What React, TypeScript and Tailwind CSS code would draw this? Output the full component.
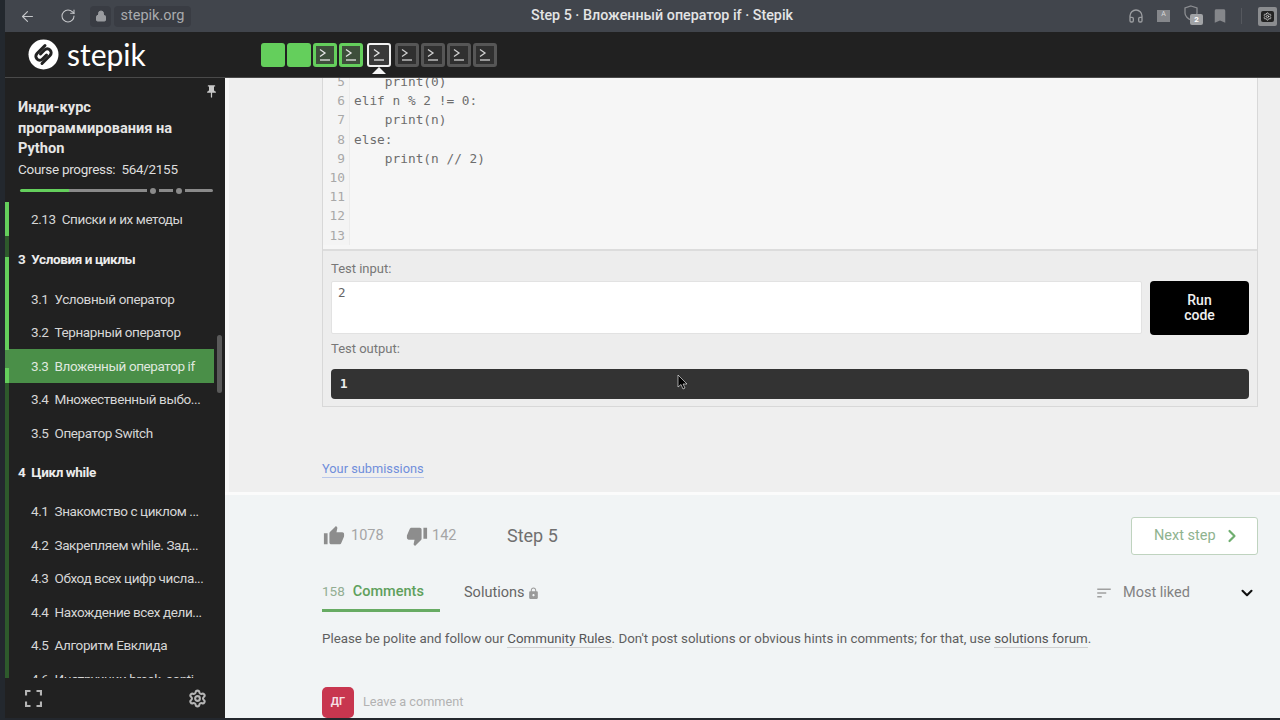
import React from "react";
import { ArrowLeft, RotateCw, Lock, Headphones, ChevronDown, ChevronRight, Settings } from "lucide-react";
import { MdThumbUp, MdThumbDown, MdLock, MdSort, MdBookmark, MdPushPin } from "react-icons/md";

const Term = ({ color = "#e5e5e5" }: { color?: string }) => (
  <svg width="14" height="14" viewBox="0 0 14 14" fill="none" stroke={color} strokeWidth="1.3">
    <path d="M2 1.5 L7 5 L2 8.5" />
    <path d="M2 12 H12" />
  </svg>
);

const Logo = () => (
  <svg width="31" height="31" viewBox="0 0 31 31">
    <circle cx="15.5" cy="15.5" r="15" fill="#fff" />
    <g fill="none" stroke="#212121" strokeWidth="3" strokeLinecap="round">
      <path d="M17 6.5 L9 14.5 A3.8 3.8 0 0 0 14.5 20 L18.5 16" />
      <path d="M14 24.5 L22 16.5 A3.8 3.8 0 0 0 16.5 11 L12.5 15" />
    </g>
  </svg>
);

const Step = ({ kind }: { kind: "solid" | "done" | "current" | "todo" }) => {
  if (kind === "solid") return <div className="w-6 h-6 rounded-[3px] bg-[#64cf5c]" />;
  if (kind === "done")
    return (
      <div className="w-6 h-6 rounded-[3px] bg-[#3e4f3b] border-[3px] border-[#64cf5c] flex items-center justify-center">
        <Term />
      </div>
    );
  if (kind === "current")
    return (
      <div className="relative w-6 h-6 rounded-[3px] bg-[#3a3a3a] border-2 border-[#f2f2f2] flex items-center justify-center">
        <Term />
        <div className="absolute left-[3px] top-[22px] w-0 h-0 border-x-[7px] border-x-transparent border-b-[7px] border-b-[#f5f5f5]" />
      </div>
    );
  return (
    <div className="w-6 h-6 rounded-[3px] bg-[#303030] border-[3px] border-[#565656] flex items-center justify-center">
      <Term color="#d0d0d0" />
    </div>
  );
};

const Row = ({ n, t, active }: { n: string; t: string; active?: boolean }) => (
  <div
    className={`h-[33.5px] w-[209px] shrink-0 flex items-center pl-[26px] text-[13.5px] tracking-[-0.4px] whitespace-nowrap ${
      active ? "bg-[#4a8f48] text-[#dfe8de]" : "text-[#d6d6d6]"
    }`}
  >
    <span className="mr-[6px]">{n}</span>
    <span>{t}</span>
  </div>
);

const Section = ({ n, t, h }: { n: string; t: string; h: string }) => (
  <div className={`${h} shrink-0 flex items-center pl-[13px] text-[13.5px] tracking-[-0.4px] font-bold text-[#ececec]`}>
    <span className="mr-[6px]">{n}</span>
    {t}
  </div>
);

const codeLines = [
  { n: 5, c: "    print(0)" },
  { n: 6, c: "elif n % 2 != 0:" },
  { n: 7, c: "    print(n)" },
  { n: 8, c: "else:" },
  { n: 9, c: "    print(n // 2)" },
  { n: 10, c: "" },
  { n: 11, c: "" },
  { n: 12, c: "" },
  { n: 13, c: "" },
];

export default function App() {
  return (
    <div className="w-[1280px] h-[720px] overflow-hidden flex bg-[#23272d] font-['Roboto',sans-serif]">
      <div className="w-[5px] shrink-0 bg-[#23282e]" />
      <div className="flex-1 flex flex-col min-w-0">
        {/* browser bar */}
        <div className="h-8 shrink-0 bg-[#41454c] flex items-center pr-[3px]">
          <ArrowLeft size={17} className="ml-[14px] text-[#c4c6c9]" strokeWidth={1.6} />
          <RotateCw size={16} className="ml-[24px] text-[#c4c6c9]" strokeWidth={1.6} />
          <div className="ml-[14px] w-[21px] h-[21px] rounded bg-[#393c43] flex items-center justify-center">
            <Lock size={12} className="text-[#9a9ca0]" fill="#9a9ca0" />
          </div>
          <div className="ml-[3px] h-[21px] w-[77px] rounded bg-[#393c43] flex items-center justify-center text-[14.5px] text-[#a9abae]">
            stepik.org
          </div>
          <div className="flex-1 text-center text-[14.3px] font-medium text-[#e3e4e5] pl-[5px]">
            Step 5 · Вложенный оператор if · Stepik
          </div>
          <Headphones size={16} className="text-[#9b9da0]" strokeWidth={2} />
          <div className="relative ml-[13px] w-[13px] h-[12px] bg-[#85878b] flex items-start justify-center text-[7px] leading-[8px] text-[#d8d8d8]">
            A
          </div>
          <div className="relative ml-[14px] w-[20px] h-[22px]">
            <svg width="14" height="16" viewBox="0 0 14 16" fill="none" stroke="#8c8e92" strokeWidth="1.3">
              <path d="M7 1 L13 3 V8 C13 11 10 14 7 15 C4 14 1 11 1 8 V3 Z" />
            </svg>
            <div className="absolute left-[6px] top-[9px] w-[13px] h-[11px] rounded-[2px] bg-[#a1a3a6] text-[8px] leading-[11px] font-bold text-center text-white">
              2
            </div>
          </div>
          <MdBookmark size={18} className="ml-[7px] text-[#85878b]" />
          <div className="ml-[12px] w-px h-4 bg-[#55585e]" />
          <div className="ml-[16px] w-[19px] h-[19px] rounded-[2px] bg-[#8b8d90] flex items-center justify-center">
            <div className="w-[13px] h-[11px] bg-[#222] rounded-[2px] flex items-center justify-center">
              <Settings size={9} className="text-[#ddd]" />
            </div>
          </div>
        </div>

        {/* stepik header */}
        <div className="h-[46px] shrink-0 bg-[#212121] border-b border-[#4a4a4a] flex items-center">
          <div className="ml-[23px] w-[233px] flex items-center">
            <Logo />
            <span className="ml-[8px] text-[30px] leading-none font-['Lato',sans-serif] font-normal text-white -translate-y-[1px]">
              stepik
            </span>
          </div>
          <div className="flex gap-[2px] items-center">
            <Step kind="solid" />
            <Step kind="solid" />
            <Step kind="done" />
            <Step kind="done" />
            <div className="mx-[2px]"><Step kind="current" /></div>
            <Step kind="todo" />
            <Step kind="todo" />
            <Step kind="todo" />
            <Step kind="todo" />
          </div>
        </div>

        <div className="flex-1 flex min-h-0">
          {/* sidebar */}
          <div className="relative w-[220px] shrink-0 bg-[#212121] flex flex-col">
            <div className="h-[124px] shrink-0 pl-[13px] pr-3 pt-[19px] relative">
              <MdPushPin size={15} className="absolute right-[6px] top-[6px] text-[#c9c9c9]" />
              <div className="text-[14.6px] leading-[20.5px] font-bold text-[#e6e6e6] w-[170px]">
                Инди-курс программирования на Python
              </div>
              <div className="text-[13.5px] leading-[20px] tracking-[-0.3px] text-[#dedede] whitespace-pre">
                Course progress:  564/2155
              </div>
              <div className="mt-[10px] ml-[2px] flex items-center h-[4px] w-[193px]">
                <div className="w-[49px] h-[3px] bg-[#64cf5c] rounded-l" />
                <div className="w-[78px] h-[3px] bg-[#8a8a8a]" />
                <div className="ml-[3px] w-[6px] h-[6px] rounded-full bg-[#8a8a8a]" />
                <div className="ml-[3px] w-[14px] h-[3px] bg-[#8a8a8a]" />
                <div className="ml-[3px] w-[6px] h-[6px] rounded-full bg-[#8a8a8a]" />
                <div className="ml-[3px] w-[28px] h-[3px] bg-[#8a8a8a] rounded-r" />
              </div>
            </div>
            <div className="relative flex-1 min-h-0 overflow-hidden flex flex-col">
              <Row n="2.13" t="Списки и их методы" />
              <Section n="3" t="Условия и циклы" h="h-[46.5px]" />
              <Row n="3.1" t="Условный оператор" />
              <Row n="3.2" t="Тернарный оператор" />
              <Row n="3.3" t="Вложенный оператор if" active />
              <Row n="3.4" t="Множественный выбо..." />
              <Row n="3.5" t="Оператор Switch" />
              <Section n="4" t="Цикл while" h="h-[45px]" />
              <Row n="4.1" t="Знакомство с циклом ..." />
              <Row n="4.2" t="Закрепляем while. Зад..." />
              <Row n="4.3" t="Обход всех цифр числа..." />
              <Row n="4.4" t="Нахождение всех дели..." />
              <Row n="4.5" t="Алгоритм Евклида" />
              <Row n="4.6" t="Инструкции break, conti" />
              <div className="absolute left-0 top-0 bottom-0 w-1 flex flex-col">
                <div className="h-[34px] shrink-0 bg-[#64cf5c]" />
                <div className="h-[21px] shrink-0 bg-[#2e5a2c]" />
                <div className="h-[93px] shrink-0 bg-[#64cf5c]" />
                <div className="h-[18px] shrink-0 bg-[#4a8f48]" />
                <div className="h-[15px] shrink-0 bg-[#64cf5c]" />
                <div className="flex-1 bg-[#2e5a2c]" />
              </div>
              <div className="absolute left-[212px] top-[133px] w-[5px] h-[58px] rounded bg-[#5a5a5a]" />
            </div>
            <div className="h-10 shrink-0 flex items-center justify-between pl-[20px] pr-[18px] bg-[#212121]">
              <svg width="17" height="17" viewBox="0 0 17 17" fill="none" stroke="#b5b5b5" strokeWidth="2.2">
                <path d="M1 5.5 V1 H5.5 M11.5 1 H16 V5.5 M16 11.5 V16 H11.5 M5.5 16 H1 V11.5" />
              </svg>
              <Settings size={19} className="text-[#b5b5b5]" strokeWidth={2.6} />
            </div>
          </div>

          {/* main */}
          <div className="relative flex-1 min-w-0 flex flex-col bg-[#f0f0f0]">
            <div className="h-[414px] shrink-0 bg-[#efefef] overflow-hidden pl-[93px] pr-[22px] border-l-[4px] border-[#f7f7f7]">
              <div className="h-[329px] border border-t-0 border-[#d8d8d8] bg-[#ededed] flex flex-col">
                <div className="h-[173px] shrink-0 bg-[#f6f6f6] border-b-2 border-[#dcdcdc] font-['DejaVu_Sans_Mono',monospace] text-[12.8px] leading-[19.2px] text-[#6d6d6d] overflow-hidden">
                  <div className="-mt-[6px]">
                    {codeLines.map((l) => (
                      <div key={l.n} className="flex h-[19.2px]">
                        <div className="w-[27px] shrink-0 pr-[4px] text-right text-[#a8a8a8] border-r border-[#ebebeb] bg-[#f4f4f4]">
                          {l.n}
                        </div>
                        <div className="pl-[4px] whitespace-pre">{l.c}</div>
                      </div>
                    ))}
                  </div>
                </div>
                <div className="flex-1 px-2 pt-[9px]">
                  <div className="text-[13px] leading-[18px] text-[#777]">Test input:</div>
                  <div className="mt-[3px] flex gap-2">
                    <div className="flex-1 h-[53px] bg-white border border-[#e2e2e2] rounded-[2px] pl-[6px] pt-[2px] text-[12.5px] leading-[18px] font-['DejaVu_Sans_Mono',monospace] text-[#666]">
                      2
                    </div>
                    <div className="w-[99px] h-[54px] bg-black rounded-[4px] flex items-center justify-center text-center text-[14px] leading-[15px] font-medium text-[#f0f0f0]">
                      Run<br />code
                    </div>
                  </div>
                  <div className="mt-[5px] text-[13px] leading-[18px] text-[#777]">Test output:</div>
                  <div className="mt-[11px] h-[30px] bg-[#333333] rounded-[4px] pl-[9px] flex items-center text-[12.5px] font-bold font-['DejaVu_Sans_Mono',monospace] text-[#eee]">
                    1
                  </div>
                </div>
              </div>
              <div className="mt-[54px] text-[12.8px] leading-[16px] text-[#6f8edb] border-b border-[#b9c7ea] w-fit">
                Your submissions
              </div>
            </div>
            <div className="flex-1 min-h-0 bg-[#f1f4f5] border-t-[3px] border-[#fbfbfb] overflow-hidden pl-[97px] pr-[22px] flex flex-col">
              <div className="h-[37px] mt-[22px] shrink-0 flex items-center">
                <MdThumbUp size={22} className="ml-[1px] text-[#8d8d8d]" />
                <span className="ml-[6px] w-[55px] text-[14.5px] text-[#a5a5a5]">1078</span>
                <MdThumbDown size={22} className="text-[#8d8d8d]" />
                <span className="ml-[4px] w-[75px] text-[14.5px] text-[#a5a5a5]">142</span>
                <span className="text-[18px] text-[#707070]">Step 5</span>
                <div className="ml-auto w-[127px] h-[38px] bg-white border border-[#bfd3bf] rounded-[3px] flex items-center gap-[6px] pl-[22px] text-[14.5px] text-[#8fb38f]">
                  Next step
                  <ChevronRight size={20} strokeWidth={2.6} className="text-[#6fae6f]" />
                </div>
              </div>
              <div className="mt-[20px] h-[40px] shrink-0 flex items-start">
                <div className="w-[118px] h-[38px] border-b-[3px] border-[#67ab63] flex items-center">
                  <span className="text-[13.5px] text-[#92ad92]">158</span>
                  <span className="ml-[8px] text-[14.5px] font-medium text-[#5fa05c]">Comments</span>
                </div>
                <div className="ml-[24px] h-[38px] flex items-center text-[14.5px] text-[#666]">
                  Solutions
                  <MdLock size={13} className="ml-[3px] text-[#9a9a9a]" />
                </div>
                <div className="ml-auto h-[38px] flex items-center pr-[2px]">
                  <MdSort size={18} className="text-[#a0a0a0]" />
                  <span className="ml-[10px] w-[115px] text-[14.5px] text-[#818181]">Most liked</span>
                  <ChevronDown size={18} strokeWidth={2.8} className="text-[#111]" />
                </div>
              </div>
              <div className="mt-[15px] h-[20px] shrink-0 flex items-center text-[13.33px] whitespace-pre text-[#5f5f5f]">
                Please be polite and follow our <span className="leading-[16px] border-b border-[#d0d0d0] text-[#555]">Community Rules</span>. Don't post solutions or obvious hints in comments; for that, use <span className="leading-[16px] border-b border-[#d0d0d0] text-[#555]">solutions forum</span>.
              </div>
              <div className="mt-[38px] flex items-center shrink-0">
                <div className="w-[32px] h-[31px] rounded-[5px] bg-[#c8364f] flex items-center justify-center text-[11px] font-bold text-[#f6dfe3]">
                  ДГ
                </div>
                <span className="ml-[9px] text-[12.7px] text-[#b2b2b2] -translate-y-[1px]">Leave a comment</span>
              </div>
            </div>
            <svg className="absolute left-[452px] top-[296px]" width="11" height="16" viewBox="0 0 11 16">
              <path d="M1 1 V13 L4 10.5 L6 15 L8 14 L6 10 L10 10 Z" fill="#000" stroke="#fff" strokeWidth="0.6" />
            </svg>
          </div>
        </div>
        <div className="h-[2px] shrink-0 bg-[#23272d]" />
      </div>
    </div>
  );
}
